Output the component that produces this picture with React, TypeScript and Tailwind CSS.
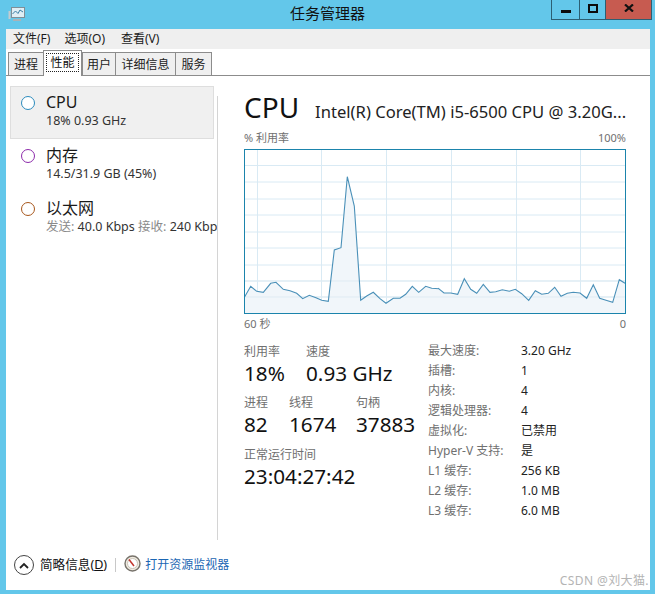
const font_stack = "font-['Noto_Sans','Noto_Sans_CJK_SC',sans-serif]";

const line_a = [[14,500],[32,469],[50,484],[70,487],[92,460],[108,457],[130,478],[150,482],[170,490],[188,506],[208,496],[228,503],[245,511],[265,514],[283,360],[303,353],[322,140],[343,228],[362,511],[380,498],[400,487],[420,506],[438,520],[460,505],[480,505],[497,493],[517,469],[536,487],[557,469],[575,475],[597,476]];
const line_b = [[25,175],[42,189],[62,189],[83,193],[103,146],[122,178],[140,190],[160,163],[180,187],[197,185],[217,179],[238,184],[256,178],[275,191],[296,211],[316,182],[335,193],[355,190],[374,172],[393,199],[412,190],[430,187],[450,189],[470,205],[490,164],[509,205],[528,211],[548,217],[568,149],[585,160]];

// both zoom crops were 3x, put everything back to page coords
const points = [
  ...line_a.map(([x, y]) => [240 + x / 3, 130 + y / 3]),
  ...line_b.map(([x, y]) => [430 + x / 3, 230 + y / 3]),
];
const line = points.map(([x, y]) => `${x.toFixed(1)},${y.toFixed(1)}`).join(" ");
const area = `244.5,313 ${line} 625,313`;

const h_lines = [165.5, 182, 199, 215, 232, 248, 265, 281, 297];
const v_lines = [257, 321, 386, 451, 516, 580];

const CpuChart = () => (
  <svg viewBox="244 149 382 165" className="block w-[382px] h-[165px]">
    <rect x="244" y="149" width="382" height="165" fill="#fff" />
    {h_lines.map((y) => (
      <line key={y} x1="244" x2="626" y1={y} y2={y} stroke="#d9eaf4" strokeWidth="1" />
    ))}
    {v_lines.map((x) => (
      <line key={x} x1={x + 0.5} x2={x + 0.5} y1="149" y2="314" stroke="#d9eaf4" strokeWidth="1" />
    ))}
    <polygon points={area} fill="#f1f6fa" />
    {h_lines.slice(-2).map((y) => (
      <line key={y} x1="244" x2="626" y1={y} y2={y} stroke="#dfebf3" strokeWidth="1" />
    ))}
    <polyline points={line} fill="none" stroke="#4a90b8" strokeWidth="1.1" />
    <rect x="244.5" y="149.5" width="381" height="164" fill="none" stroke="#1b84ac" strokeWidth="1" />
  </svg>
);

const SideItem = ($: { name: string; ring: string; selected?: boolean; children: React.ReactNode }) => (
  <div
    className={
      "flex h-[53px] w-[204px] border pl-[10px] pt-[5px] " +
      ($.selected ? "border-[#dedede] bg-[#f0f0f0]" : "border-transparent")
    }
  >
    <div className={"mt-[4px] h-[14px] w-[14px] shrink-0 rounded-full border-[1.5px] bg-white " + $.ring} />
    <div className="ml-[11px] whitespace-nowrap">
      <div className="text-[16px] leading-[20px] text-[#1a1a1a]">{$.name}</div>
      <div className="mt-[1px] text-[12.5px] leading-[16px] text-[#333]">{$.children}</div>
    </div>
  </div>
);

const Stat = ($: { label: string; value: string; w: string }) => (
  <div className={$.w}>
    <div className="text-[12px] leading-[16px] text-[#707070]">{$.label}</div>
    <div className="text-[20.7px] leading-[27px] text-[#111]">{$.value}</div>
  </div>
);

const specs = [
  ["最大速度:", "3.20 GHz"],
  ["插槽:", "1"],
  ["内核:", "4"],
  ["逻辑处理器:", "4"],
  ["虚拟化:", "已禁用"],
  ["Hyper-V 支持:", "是"],
  ["L1 缓存:", "256 KB"],
  ["L2 缓存:", "1.0 MB"],
  ["L3 缓存:", "6.0 MB"],
];

export default function App() {
  return (
    <div className={"relative flex h-[594px] w-[655px] flex-col overflow-hidden bg-[#63c7ea] " + font_stack}>
      <div className="grid h-[29px] shrink-0 grid-cols-[1fr_auto_1fr]">
        <div className="pl-[8px] pt-[7px]">
          <svg width="17" height="15" viewBox="0 0 17 15">
            <rect x="3.5" y="0.5" width="13" height="10" fill="#dfeef5" stroke="#7f8f98" />
            <path d="M4.5 7 L7.5 4 L10 6.5 L12 3 L15 5" fill="none" stroke="#3a7fa6" />
            <rect x="0.5" y="4" width="2" height="8" fill="#c4ccd0" />
            <rect x="5" y="12" width="8" height="2" fill="#a9b2b7" />
          </svg>
        </div>
        <div className="pt-[3px] text-[15px] leading-[20px] text-[#111]">任务管理器</div>
        <div className="flex justify-end pr-[3px]">
          <div className="flex h-[20px] border-x border-b border-[#2c5f73]">
            <div className="flex w-[28px] items-center justify-center border-r border-[#2c5f73]">
              <div className="mt-[4px] h-[3px] w-[10px] bg-[#0c0c0c]" />
            </div>
            <div className="flex w-[26px] items-center justify-center border-r border-[#2c5f73]">
              <div className="mb-[3px] h-[9px] w-[10px] border-[2px] border-[#0c0c0c]" />
            </div>
            <div className="flex w-[45px] items-center justify-center bg-[#c75b50] pb-[3px]">
              <svg width="10" height="8" viewBox="0 0 10 8">
                <path d="M1 0.5 L9 7.5 M9 0.5 L1 7.5" fill="none" stroke="#111" strokeWidth="2.2" />
              </svg>
            </div>
          </div>
        </div>
      </div>

      <div className="ml-[6px] mr-[5px] mb-[4px] flex min-h-0 flex-1 flex-col bg-white">
        <div className="flex h-[20px] shrink-0 bg-[#efefef] pl-[7px] text-[12px] leading-[20px] text-[#1a1a1a]">
          <span>文件(F)</span>
          <span className="ml-[14px]">选项(O)</span>
          <span className="ml-[16px]">查看(V)</span>
        </div>

        <div className="flex h-[27px] shrink-0 items-end border-b border-[#8c8c8c] pl-[2px] text-center text-[12px] leading-[23px] text-[#222]">
          <div className="h-[23px] w-[36px] border border-b-0 border-[#8c8c8c] bg-[#efefef]">进程</div>
          <div className="relative z-10 -mb-px -ml-[1px] h-[26px] w-[39px] border border-b-0 border-[#8c8c8c] bg-white px-[2px] pt-[2px] text-[#111]">
            <div className="border border-dotted border-[#222] leading-[17px]">性能</div>
          </div>
          <div className="h-[23px] w-[34px] border border-b-0 border-[#8c8c8c] bg-[#efefef]">用户</div>
          <div className="h-[23px] w-[60px] border border-b-0 border-l-0 border-[#8c8c8c] bg-[#efefef]">详细信息</div>
          <div className="h-[23px] w-[36px] border border-b-0 border-l-0 border-[#8c8c8c] bg-[#efefef]">服务</div>
        </div>

        <div className="flex min-h-0 flex-1">
          <div className="flex w-[211px] shrink-0 flex-col overflow-hidden pl-[4px] pt-[10px]">
            <SideItem name="CPU" ring="border-[#2b8bbd]" selected>
              18% 0.93 GHz
            </SideItem>
            <SideItem name="内存" ring="border-[#8d2bab]">
              14.5/31.9 GB (45%)
            </SideItem>
            <SideItem name="以太网" ring="border-[#a7571c]">
              <span className="text-[#8a8a8a]">发送:</span> 40.0 Kbps <span className="text-[#8a8a8a]">接收:</span> 240 Kbps
            </SideItem>
          </div>

          <div className="mt-[20px] w-px shrink-0 bg-[#d4d4d4]" />

          <div className="min-w-0 flex-1 pl-[26px] pt-[14px]">
            <div className="flex h-[34px] items-end whitespace-nowrap">
              <span className="text-[28px] leading-[34px] text-[#111]">CPU</span>
              <span className="mb-[1px] ml-[16px] text-[16.6px] leading-[22px] text-[#222]">
                Intel(R) Core(TM) i5-6500 CPU @ 3.20G...
              </span>
            </div>
            <div className="mt-[6px] flex h-[16px] w-[382px] justify-between text-[11px] leading-[16px] text-[#707070]">
              <span>% 利用率</span>
              <span>100%</span>
            </div>
            <div className="mt-[3px]">
              <CpuChart />
            </div>
            <div className="mt-[2px] flex h-[16px] w-[382px] justify-between text-[11px] leading-[16px] text-[#707070]">
              <span>60 秒</span>
              <span>0</span>
            </div>

            <div className="mt-[12px] flex">
              <div className="w-[184px] shrink-0">
                <div className="flex">
                  <Stat label="利用率" value="18%" w="w-[62px]" />
                  <Stat label="速度" value="0.93 GHz" w="w-[110px]" />
                </div>
                <div className="mt-[8px] flex">
                  <Stat label="进程" value="82" w="w-[45px]" />
                  <Stat label="线程" value="1674" w="w-[67px]" />
                  <Stat label="句柄" value="37883" w="w-[70px]" />
                </div>
                <div className="mt-[9px]">
                  <Stat label="正常运行时间" value="23:04:27:42" w="w-[150px]" />
                </div>
              </div>
              <div className="-mt-[3px] grid grid-cols-[93px_auto] content-start text-[12px] leading-[20px]">
                {specs.map(([k, v]) => (
                  <div key={k} className="contents">
                    <div className="text-[#707070]">{k}</div>
                    <div className="text-[#222]">{v}</div>
                  </div>
                ))}
              </div>
            </div>
          </div>
        </div>

        <div className="flex h-[50px] shrink-0 items-start pl-[8px] pt-[15px]">
          <div className="flex h-[20px] w-[20px] items-center justify-center rounded-full border-[1.5px] border-[#444]">
            <svg width="10" height="7" viewBox="0 0 10 7">
              <path d="M1 6 L5 2 L9 6" fill="none" stroke="#222" strokeWidth="1.8" />
            </svg>
          </div>
          <span className="ml-[6px] text-[12.6px] leading-[20px] text-[#111]">
            简略信息(<span className="underline">D</span>)
          </span>
          <div className="ml-[8px] mt-[3px] h-[14px] w-px bg-[#c8c8c8]" />
          <svg className="ml-[8px]" width="17" height="17" viewBox="0 0 17 17">
            <circle cx="8.5" cy="8.5" r="7.5" fill="#efeae0" stroke="#77736b" strokeWidth="1.4" />
            <circle cx="8.5" cy="8.5" r="5" fill="#fff" stroke="#c9c3b6" />
            <path d="M5 4.5 L10 11" stroke="#c2352c" strokeWidth="1.5" />
          </svg>
          <span className="ml-[4px] text-[12px] leading-[20px] text-[#1a66b3]">打开资源监视器</span>
        </div>
      </div>

      <div className="absolute bottom-[6px] right-[6px] text-[12px] leading-[14px] tracking-[0.4px] text-[#b4b4b4]">CSDN @刘大猫.</div>
    </div>
  );
}
